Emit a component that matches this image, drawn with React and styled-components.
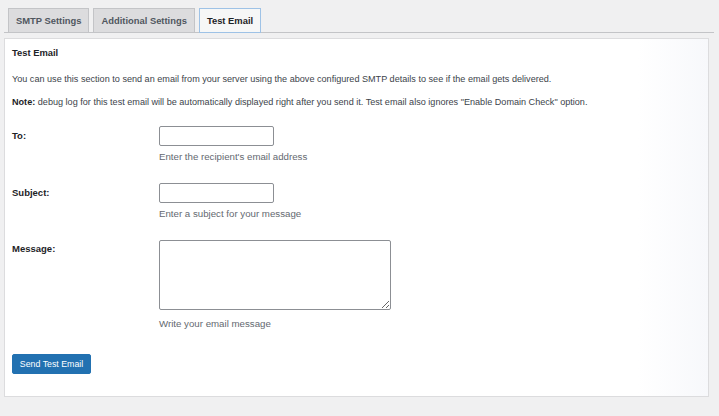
import styled, { createGlobalStyle } from "styled-components";

const GlobalStyle = createGlobalStyle`
  html, body {
    margin: 0;
    padding: 0;
    background: #f0f0f1;
  }
  body {
    font-family: "Liberation Sans", Arial, sans-serif;
    color: #3c434a;
  }
`;

const Page = styled.div`
  padding: 8px 10px 18px 4px;
`;

const TabNav = styled.div`
  display: flex;
  gap: 4px;
  padding-left: 4px;
  margin-right: -5px;
  border-bottom: 1px solid #c3c4c7;
`;

const Tab = styled.div`
  height: 23px;
  line-height: 23px;
  padding: 0 7px;
  font-size: 9.4px;
  font-weight: 700;
  color: ${(p) => (p.active ? "#1d2327" : "#50575e")};
  background: ${(p) => (p.active ? "#f6f7f7" : "#dcdcde")};
  border: 1px solid ${(p) => (p.active ? "#9ec2e6" : "#c3c4c7")};
  border-bottom: none;
  margin-bottom: ${(p) => (p.active ? "-1px" : "0")};
  ${(p) => p.active && "border-bottom: 1px solid #9ec2e6;"}
`;

const Panel = styled.div`
  margin-top: 5px;
  background: linear-gradient(to right, #ffffff 90%, #f7f8fb);
  border: 1px solid #dcdcde;
  padding: 8px 7px 22px;
  font-size: 9.1px;
  line-height: 12px;
`;

const Title = styled.div`
  font-size: 9.4px;
  font-weight: 700;
  color: #1d2327;
`;

const Paragraph = styled.p`
  margin: ${(p) => p.top}px 0 0;
  color: #3c434a;
  strong {
    color: #1d2327;
    font-weight: 700;
  }
`;

const Form = styled.div`
  margin-top: 18px;
  display: flex;
  flex-direction: column;
  gap: 20px;
`;

const Row = styled.div`
  display: grid;
  grid-template-columns: 147px 1fr;
`;

const Label = styled.label`
  line-height: 20px;
  margin-top: ${(p) => p.offset || 0}px;
  font-weight: 700;
  color: #1d2327;
  font-size: 9.5px;
`;

const Field = styled.div`
  display: flex;
  flex-direction: column;
  align-items: flex-start;
`;

const TextInput = styled.input`
  box-sizing: border-box;
  width: 115px;
  height: 20px;
  border: 1px solid #8c8f94;
  border-radius: 2px;
  background: #fff;
  padding: 0 4px;
  font: inherit;
`;

const TextArea = styled.textarea`
  box-sizing: border-box;
  width: 232px;
  height: 70px;
  border: 1px solid #8c8f94;
  border-radius: 2px;
  background: #fff;
  padding: 4px;
  font: inherit;
  display: block;
`;

const Hint = styled.div`
  margin-top: ${(p) => p.top}px;
  color: #646970;
  font-size: 9.7px;
`;

const Button = styled.button`
  margin-top: 24px;
  width: 79px;
  height: 20px;
  padding: 0;
  background: #2271b1;
  border: 1px solid #2271b1;
  border-radius: 2px;
  color: #fff;
  font-family: inherit;
  font-size: 8.8px;
  cursor: pointer;
`;

export default function App() {
  return (
    <>
      <GlobalStyle />
      <Page>
        <TabNav>
          <Tab>SMTP Settings</Tab>
          <Tab>Additional Settings</Tab>
          <Tab active>Test Email</Tab>
        </TabNav>
        <Panel>
          <Title>Test Email</Title>
          <Paragraph top={14}>
            You can use this section to send an email from your server using the above
            configured SMTP details to see if the email gets delivered.
          </Paragraph>
          <Paragraph top={11}>
            <strong>Note:</strong> debug log for this test email will be automatically
            displayed right after you send it. Test email also ignores "Enable Domain
            Check" option.
          </Paragraph>
          <Form>
            <Row>
              <Label>To:</Label>
              <Field>
                <TextInput type="email" />
                <Hint top={5}>Enter the recipient's email address</Hint>
              </Field>
            </Row>
            <Row>
              <Label>Subject:</Label>
              <Field>
                <TextInput type="text" />
                <Hint top={5}>Enter a subject for your message</Hint>
              </Field>
            </Row>
            <Row>
              <Label offset={-1}>Message:</Label>
              <Field>
                <TextArea />
                <Hint top={8}>Write your email message</Hint>
              </Field>
            </Row>
          </Form>
          <Button>Send Test Email</Button>
        </Panel>
      </Page>
    </>
  );
}
